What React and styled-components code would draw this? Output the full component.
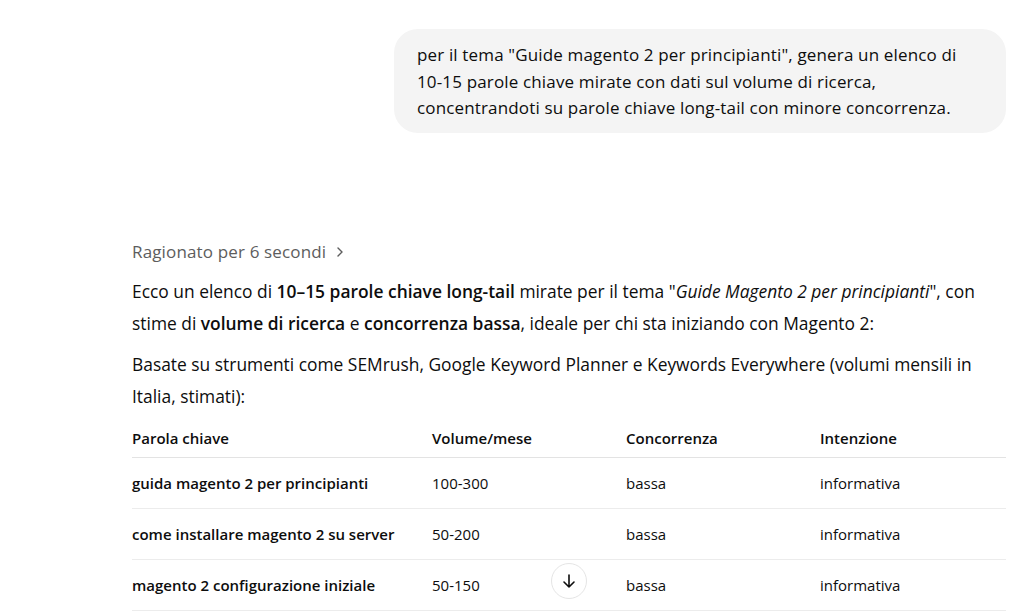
import React from "react";
import styled, { createGlobalStyle } from "styled-components";

const Global = createGlobalStyle`
  html, body { margin:0; padding:0; background:#fff; }
  body {
    font-family: "Open Sans", "Noto Sans", "Liberation Sans", sans-serif;
    color:#0d0d0d;
    overflow:hidden;
  }
`;

const Page = styled.main`
  width:1024px;
  height:612px;
  overflow:hidden;
  display:flex;
  justify-content:flex-start;
`;

const Column = styled.div`
  width:874px;
  margin-left:132px;
  display:flex;
  flex-direction:column;
`;

const UserRow = styled.div`
  display:flex;
  justify-content:flex-end;
  padding-top:29px;
`;

const Bubble = styled.div`
  width:612px;
  box-sizing:border-box;
  background:#f4f4f4;
  border-radius:24px;
  padding:13px 20px 11px 23px;
  font-size:17px;
  line-height:26.5px;
  letter-spacing:0.15px;
`;

const Thought = styled.div`
  margin-top:107px;
  display:flex;
  align-items:center;
  gap:7px;
  color:#5d5d5d;
  font-size:17px;
  line-height:24px;
  letter-spacing:0.15px;
`;

const Para = styled.p`
  margin:${({ $top }) => $top || 0}px 0 0;
  font-size:17.4px;
  line-height:32px;
  letter-spacing:0;
  b { font-weight:600; }
  i { font-style:italic; }
`;

const Table = styled.table`
  margin-top:7px;
  width:100%;
  border-collapse:collapse;
  font-size:15px;
  th {
    text-align:left;
    font-weight:600;
    height:38px;
    padding:0;
    border-bottom:1px solid #e3e3e3;
  }
  td {
    padding:0;
    height:50px;
    border-bottom:1px solid #ececec;
  }
  td:first-child { font-weight:600; }
`;

const Col = styled.col`
  width:${({ $w }) => $w}px;
`;

const Cell = styled.td`
  position:relative;
`;

const ScrollBtn = styled.button`
  position:absolute;
  left:-75px;
  top:50%;
  transform:translateY(-50%);
  margin-top:-4px;
  width:36px;
  height:36px;
  border-radius:50%;
  border:1px solid #e5e5e5;
  background:#fff;
  display:flex;
  align-items:center;
  justify-content:center;
  padding:0;
  color:#0d0d0d;
`;

const rows = [
  ["guida magento 2 per principianti", "100-300", "bassa", "informativa"],
  ["come installare magento 2 su server", "50-200", "bassa", "informativa"],
  ["magento 2 configurazione iniziale", "50-150", "bassa", "informativa"],
];

export default function App() {
  return (
    <Page>
      <Global />
      <Column>
        <UserRow>
          <Bubble>
            per il tema "Guide magento 2 per principianti", genera un elenco di 10-15 parole chiave mirate con dati sul volume di ricerca, concentrandoti su parole chiave long-tail con minore concorrenza.
          </Bubble>
        </UserRow>
        <Thought>
          Ragionato per 6 secondi
          <svg width="14" height="14" viewBox="0 0 14 14" fill="none" stroke="#5d5d5d" strokeWidth="1.4" strokeLinecap="round" strokeLinejoin="round">
            <path d="M5 3l4 4-4 4" />
          </svg>
        </Thought>
        <Para $top={11}>
          Ecco un elenco di <b>10–15 parole chiave long-tail</b> mirate per il tema "<i>Guide Magento 2 per principianti</i>", con stime di <b>volume di ricerca</b> e <b>concorrenza bassa</b>, ideale per chi sta iniziando con Magento 2:
        </Para>
        <Para $top={9}>
          Basate su strumenti come SEMrush, Google Keyword Planner e Keywords Everywhere (volumi mensili in Italia, stimati):
        </Para>
        <Table>
          <colgroup>
            <Col $w={300} />
            <Col $w={194} />
            <Col $w={194} />
            <Col />
          </colgroup>
          <thead>
            <tr>
              <th>Parola chiave</th>
              <th>Volume/mese</th>
              <th>Concorrenza</th>
              <th>Intenzione</th>
            </tr>
          </thead>
          <tbody>
            {rows.map((r, i) => (
              <tr key={i}>
                <td>{r[0]}</td>
                <td>{r[1]}</td>
                {i === 2 ? (
                  <Cell>
                    <ScrollBtn>
                      <svg width="20" height="20" viewBox="0 0 20 20" fill="none" stroke="currentColor" strokeWidth="1.6" strokeLinecap="round" strokeLinejoin="round">
                        <path d="M10 4v12M5 11l5 5 5-5" />
                      </svg>
                    </ScrollBtn>
                    {r[2]}
                  </Cell>
                ) : (
                  <td>{r[2]}</td>
                )}
                <td>{r[3]}</td>
              </tr>
            ))}
          </tbody>
        </Table>
      </Column>
    </Page>
  );
}
